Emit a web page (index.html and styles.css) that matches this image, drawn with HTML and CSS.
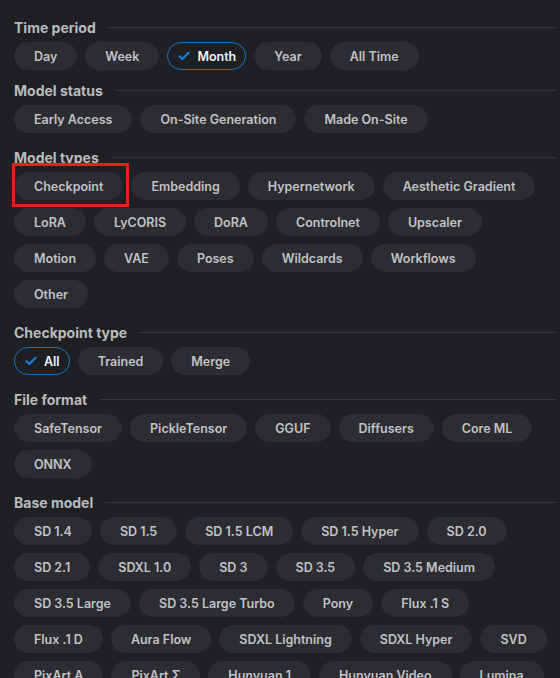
FILE: index.html
```html
<!DOCTYPE html>
<html lang="en">
  <head>
    <meta charset="UTF-8" />
    <meta name="viewport" content="width=device-width, initial-scale=1.0" />
    <title>Model Filters</title>
    <link rel="stylesheet" href="styles.css">
  </head>
  <body>
    <main class="filters">
      <section class="group group-first">
        <h3 class="group-title">Time period</h3>
        <div class="chips">
          <span class="chip">Day</span>
          <span class="chip">Week</span>
          <span class="chip checked">
            <svg class="check" viewBox="0 0 12 10" width="12" height="10"><path d="M1.5 5.2 L4.4 8 L10.5 1.8" /></svg>
            Month
          </span>
          <span class="chip">Year</span>
          <span class="chip">All Time</span>
        </div>
      </section>

      <section class="group">
        <h3 class="group-title">Model status</h3>
        <div class="chips">
          <span class="chip">Early Access</span>
          <span class="chip">On-Site Generation</span>
          <span class="chip">Made On-Site</span>
        </div>
      </section>

      <section class="group">
        <h3 class="group-title">Model types</h3>
        <div class="chips">
          <span class="chip marked">Checkpoint</span>
          <span class="chip">Embedding</span>
          <span class="chip">Hypernetwork</span>
          <span class="chip">Aesthetic Gradient</span>
          <span class="chip">LoRA</span>
          <span class="chip">LyCORIS</span>
          <span class="chip">DoRA</span>
          <span class="chip">Controlnet</span>
          <span class="chip">Upscaler</span>
          <span class="chip">Motion</span>
          <span class="chip">VAE</span>
          <span class="chip">Poses</span>
          <span class="chip">Wildcards</span>
          <span class="chip">Workflows</span>
          <span class="chip">Other</span>
        </div>
      </section>

      <section class="group">
        <h3 class="group-title">Checkpoint type</h3>
        <div class="chips">
          <span class="chip checked">
            <svg class="check" viewBox="0 0 12 10" width="12" height="10"><path d="M1.5 5.2 L4.4 8 L10.5 1.8" /></svg>
            All
          </span>
          <span class="chip">Trained</span>
          <span class="chip">Merge</span>
        </div>
      </section>

      <section class="group">
        <h3 class="group-title">File format</h3>
        <div class="chips">
          <span class="chip">SafeTensor</span>
          <span class="chip">PickleTensor</span>
          <span class="chip">GGUF</span>
          <span class="chip">Diffusers</span>
          <span class="chip">Core ML</span>
          <span class="chip">ONNX</span>
        </div>
      </section>

      <section class="group">
        <h3 class="group-title">Base model</h3>
        <div class="chips">
          <span class="chip">SD 1.4</span>
          <span class="chip">SD 1.5</span>
          <span class="chip">SD 1.5 LCM</span>
          <span class="chip">SD 1.5 Hyper</span>
          <span class="chip">SD 2.0</span>
          <span class="chip">SD 2.1</span>
          <span class="chip">SDXL 1.0</span>
          <span class="chip">SD 3</span>
          <span class="chip">SD 3.5</span>
          <span class="chip">SD 3.5 Medium</span>
          <span class="chip">SD 3.5 Large</span>
          <span class="chip">SD 3.5 Large Turbo</span>
          <span class="chip">Pony</span>
          <span class="chip">Flux .1 S</span>
          <span class="chip">Flux .1 D</span>
          <span class="chip">Aura Flow</span>
          <span class="chip">SDXL Lightning</span>
          <span class="chip">SDXL Hyper</span>
          <span class="chip">SVD</span>
          <span class="chip">PixArt A</span>
          <span class="chip">PixArt Σ</span>
          <span class="chip">Hunyuan 1</span>
          <span class="chip">Hunyuan Video</span>
          <span class="chip">Lumina</span>
        </div>
      </section>
    </main>
  </body>
</html>
```

FILE: styles.css
```css
* {
  padding: 0;
  margin: 0;
  box-sizing: border-box;
}
html {
  font-size: 12.5px;
  font-family: Inter, 'Noto Sans', sans-serif;
  color: #c1c2c5;
  background-color: #1f2024;
}
body {
  background-color: #1f2024;
  min-height: 100vh;
  overflow: hidden;
}
.filters {
  padding: 16px 4px 0 14px;
  display: flex;
  flex-direction: column;
  gap: 13px;
}
.group-first {
  margin-bottom: -4px;
}
.group-title {
  display: flex;
  align-items: center;
  height: 22px;
  margin-bottom: 4px;
  font-size: 14px;
  font-weight: 700;
  color: #b9bbbf;
}
.group-title::after {
  content: '';
  flex: 1;
  height: 1px;
  margin-left: 12px;
  background-color: #33353a;
}
.chips {
  display: flex;
  flex-wrap: wrap;
  gap: 8px;
}
.chip {
  display: inline-flex;
  align-items: center;
  height: 28px;
  padding: 0 19px;
  border-radius: 14px;
  background-color: #2c2d32;
  border: 1px solid #2c2d32;
  font-weight: 600;
  color: #c1c2c5;
  white-space: nowrap;
}
.chip.checked {
  padding: 0 9px 0 10px;
  gap: 7px;
  background-color: #1d1f23;
  border-color: #1971c2;
  color: #f1f3f5;
}
.check {
  fill: none;
  stroke: #1c7ed6;
  stroke-width: 2.2;
  stroke-linecap: round;
  stroke-linejoin: round;
}
/* red annotation box over the chip */
.marked {
  position: relative;
}
.marked::after {
  content: '';
  position: absolute;
  left: -3px;
  right: -7px;
  top: -10px;
  bottom: -8px;
  border: 3px solid #e5201d;
}
```
